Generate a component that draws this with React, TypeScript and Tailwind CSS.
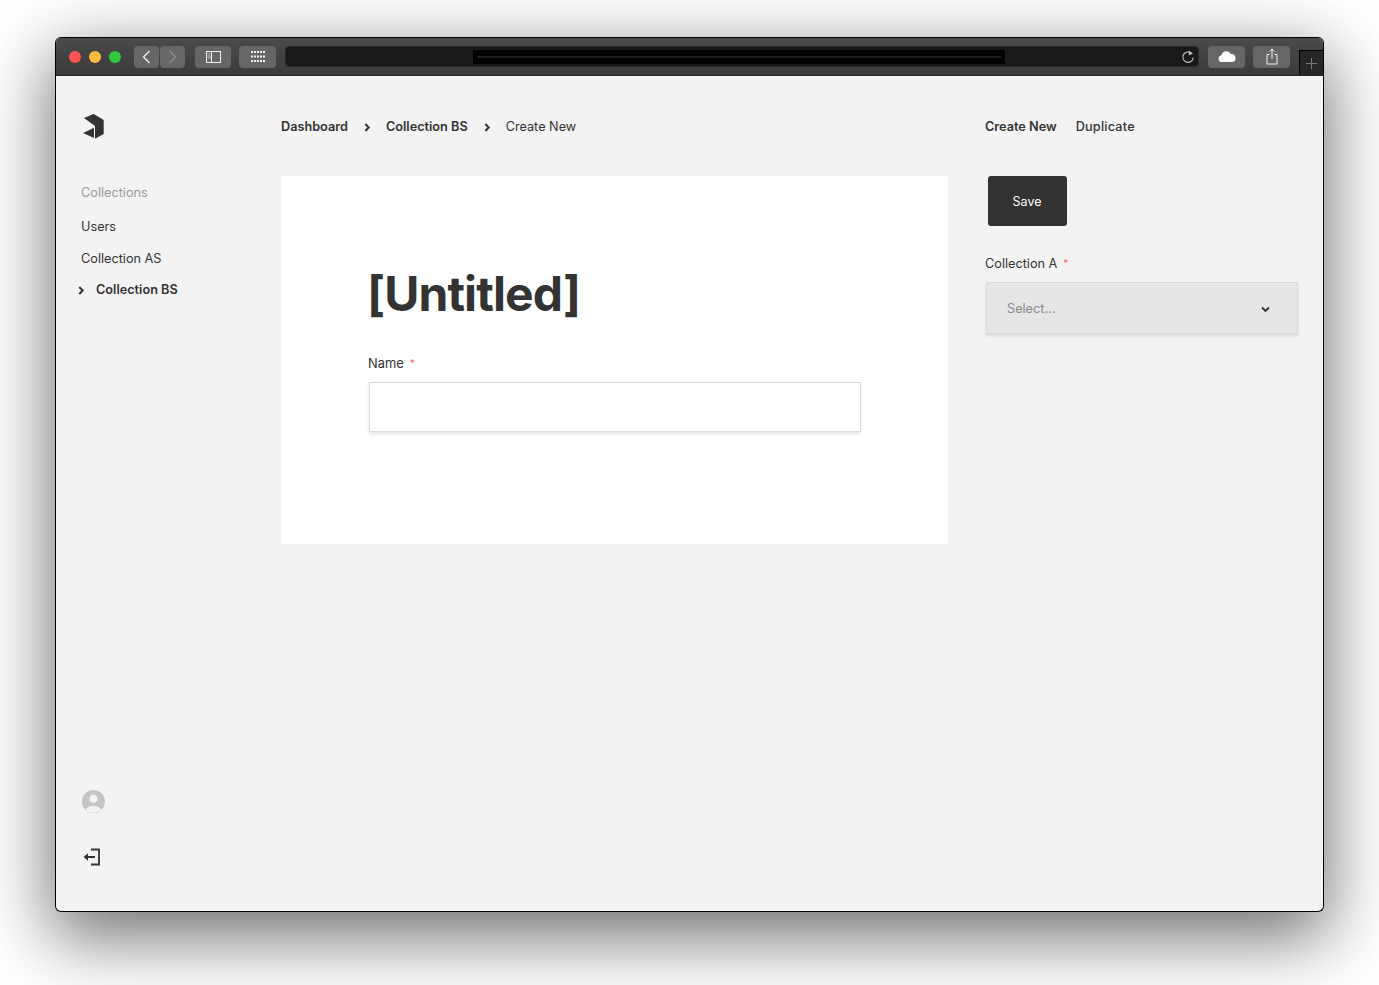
import { FC } from "react";

const Chevron: FC<{ className?: string }> = ({ className = "" }) => (
  <svg width="7" height="9" viewBox="0 0 7 9" fill="none" className={className}>
    <path d="M1.300 1l3.400 3.500L1.300 8" stroke="#333333" strokeWidth="2" />
  </svg>
);

const Logo = () => (
  <svg width="22" height="26" viewBox="0 0 22 26" className="block">
    <path d="M1 4L10.700 0 20.700 6v14L12 24.700V12z" fill="#333333" />
    <path d="M11 13.700V24L0 19z" fill="#333333" />
  </svg>
);

const Asterisk = () => <span className="ml-[6px] text-[10px] leading-none text-[#ff6b6b] relative -top-px">*</span>;

const ToolButton: FC<{ className?: string; children: React.ReactNode }> = ({ className = "", children }) => (
  <div className={`h-[22px] shrink-0 rounded-[4px] bg-[#666666] flex items-center justify-center ${className}`}>{children}</div>
);

const TitleBar = () => (
  <div className="h-[39px] shrink-0 flex items-center pl-[13px] bg-gradient-to-b from-[#4a4a4a] to-[#3b3b3b] border-t border-black border-b-[#2a2a2a] border-b">
    <span className="w-3 h-3 rounded-full bg-[#fc5553]" />
    <span className="w-3 h-3 rounded-full bg-[#fdbc3f] ml-2" />
    <span className="w-3 h-3 rounded-full bg-[#2fc93f] ml-2" />
    <div className="flex ml-[13px] gap-px">
      <ToolButton className="w-[25px]">
        <svg width="9" height="14" viewBox="0 0 9 14" fill="none">
          <path d="M7.500 1L1.500 7l6 6" stroke="#f2f2f2" strokeWidth="1.300" />
        </svg>
      </ToolButton>
      <ToolButton className="w-[25px]">
        <svg width="9" height="14" viewBox="0 0 9 14" fill="none">
          <path d="M1.500 1l6 6-6 6" stroke="#8f8f8f" strokeWidth="1.300" />
        </svg>
      </ToolButton>
    </div>
    <ToolButton className="w-9 ml-[10px]">
      <svg width="15" height="12" viewBox="0 0 15 12" fill="none">
        <rect x="0.500" y="0.500" width="14" height="11" stroke="#f2f2f2" />
        <path d="M5.500 0.500v11" stroke="#f2f2f2" />
        <path d="M1.500 3h3M1.500 5h3M1.500 7h3" stroke="#bdbdbd" />
      </svg>
    </ToolButton>
    <ToolButton className="w-[37px] ml-2">
      <svg width="14" height="11" viewBox="0 0 14 11" fill="#f2f2f2">
        {[0, 4.500, 9].map((y) =>
          [0, 3, 6, 9, 12].map((x) => <rect key={`${x}-${y}`} x={x} y={y} width="2" height="2" />),
        )}
      </svg>
    </ToolButton>
    <div className="ml-[9px] w-[914px] shrink-0 h-[21px] rounded-[4px] bg-[#191919] border border-[#2b2b2b] flex items-center justify-between pr-[3px]">
      <div className="ml-[187px] w-[532px] h-[14px] bg-black flex items-center px-1">
        <div className="h-[2px] w-full bg-[#1d1d1d]" />
      </div>
      <svg width="14" height="14" viewBox="0 0 14 14" fill="none">
        <path d="M10.800 3.600A5.200 5.200 0 1 0 12.200 7.500" stroke="#c4c4c4" strokeWidth="1.100" />
        <path d="M7.800 0.500L12 3.500 7.800 5.500z" fill="#c4c4c4" />
      </svg>
    </div>
    <ToolButton className="w-[37px] ml-[9px]">
      <svg width="18" height="11" viewBox="0 0 18 11" fill="#ffffff">
        <path d="M4 11a3.400 3.400 0 0 1-.6-6.750A5 5 0 0 1 12.800 3 4 4 0 0 1 14 11z" />
      </svg>
    </ToolButton>
    <ToolButton className="w-[37px] ml-[8px]">
      <svg width="12" height="17" viewBox="0 0 12 17" fill="none">
        <path d="M3.500 6.500H1v9.500h10V6.500H8.500" stroke="#f2f2f2" />
        <path d="M6 11V1M3.500 3.500L6 1l2.500 2.500" stroke="#f2f2f2" />
      </svg>
    </ToolButton>
    <div className="ml-[9px] w-[24px] shrink-0 self-stretch mt-[12px] bg-[#262626] border-t border-l border-black flex items-center justify-center">
      <svg width="11" height="11" viewBox="0 0 11 11" fill="none">
        <path d="M5.500 0v11M0 5.500h11" stroke="#777777" />
      </svg>
    </div>
  </div>
);

const Sidebar = () => (
  <aside className="w-[225px] shrink-0 flex flex-col justify-between pl-[25px] pt-[38px] pb-[45px]">
    <div>
      <div className="ml-[2px]">
        <Logo />
      </div>
      <div className="mt-[43px] text-[12.700px] leading-5 text-[#9a9a9a]">Collections</div>
      <ul className="mt-[14px] text-[12.700px] leading-5 text-[#333333]">
        <li>Users</li>
        <li className="mt-3">Collection AS</li>
        <li className="mt-[11px] flex items-center font-semibold -ml-[3px]">
          <Chevron />
          <span className="ml-[11px]">Collection BS</span>
        </li>
      </ul>
    </div>
    <div className="flex flex-col ml-px">
      <svg width="23" height="23" viewBox="0 0 23 23">
        <circle cx="11.500" cy="11.500" r="11.500" fill="#c4c4c4" />
        <circle cx="11.500" cy="8.700" r="4" fill="#f3f3f3" />
        <path d="M3.800 20a8 5.500 0 0 1 15.400 0 11.500 11.500 0 0 1-15.400 0z" fill="#f3f3f3" />
      </svg>
      <svg width="18" height="18" viewBox="0 0 18 18" fill="none" className="mt-[35px] ml-px">
        <path d="M8 1.500h8v15H8" stroke="#333333" strokeWidth="1.800" />
        <path d="M12 9H3" stroke="#333333" strokeWidth="1.800" />
        <path d="M0.500 9L5 5.300v7.400z" fill="#333333" />
      </svg>
    </div>
  </aside>
);

const Breadcrumbs = () => (
  <nav className="flex items-center text-[12.700px] leading-5 text-[#333333]">
    <span className="font-semibold">Dashboard</span>
    <Chevron className="ml-[16px]" />
    <span className="font-semibold ml-[15px]">Collection BS</span>
    <Chevron className="ml-[16px]" />
    <span className="ml-[15px]">Create New</span>
  </nav>
);

const Main = () => (
  <main className="w-[667px] shrink-0 pt-[41px]">
    <Breadcrumbs />
    <div className="mt-[39px] h-[368px] bg-white pt-[89px] pl-[87px] pr-[87px]">
      <h1 className="text-[48px] leading-[58px] font-bold tracking-[-0.900px] -ml-px text-[#333333]">[Untitled]</h1>
      <label className="mt-[31px] flex items-center text-[12.900px] leading-5 text-[#333333]">
        Name
        <Asterisk />
      </label>
      <div className="mt-2 h-[50px] w-[492px] ml-px bg-white border border-[#d9d9d9] shadow-[0_2px_3px_rgba(0,0,0,0.1)]" />
    </div>
  </main>
);

const RightPanel = () => (
  <section className="w-[313px] ml-[37px] shrink-0 pt-[41px]">
    <div className="flex text-[12.700px] leading-5 text-[#333333]">
      <span className="font-semibold">Create New</span>
      <span className="font-medium ml-[19px] tracking-[0.2px]">Duplicate</span>
    </div>
    <button className="mt-[39px] ml-[3px] block w-[79px] h-[50px] pt-[2px] pr-[1px] rounded-[3px] bg-[#333333] text-white text-[12.500px]">
      Save
    </button>
    <label className="mt-[28px] flex items-center text-[12.700px] leading-5 text-[#333333]">
      Collection A
      <Asterisk />
    </label>
    <div className="mt-2 h-[52px] ml-px bg-[#e6e6e6] border border-[#d9d9d9] shadow-[0_2px_3px_rgba(0,0,0,0.1)] flex items-center justify-between pl-5 pr-[27px] pt-[2px] text-[12.700px] text-[#8a8a8a]">
      <span>Select...</span>
      <svg width="9" height="7" viewBox="0 0 9 7" fill="none">
        <path d="M1 1.500l3.500 3.500L8 1.500" stroke="#333333" strokeWidth="1.800" />
      </svg>
    </div>
  </section>
);

export default function App() {
  return (
    <div className="h-[985px] bg-white pt-[37px] pl-[55px] overflow-hidden font-['Inter',sans-serif]">
      <div className="w-[1269px] h-[875px] flex flex-col rounded-[6px] overflow-hidden border border-black border-t-0 bg-[#f3f3f3] shadow-[0_22px_70px_4px_rgba(0,0,0,0.56)]">
        <TitleBar />
        <div className="flex flex-1 min-h-0">
          <Sidebar />
          <Main />
          <RightPanel />
        </div>
      </div>
    </div>
  );
}
